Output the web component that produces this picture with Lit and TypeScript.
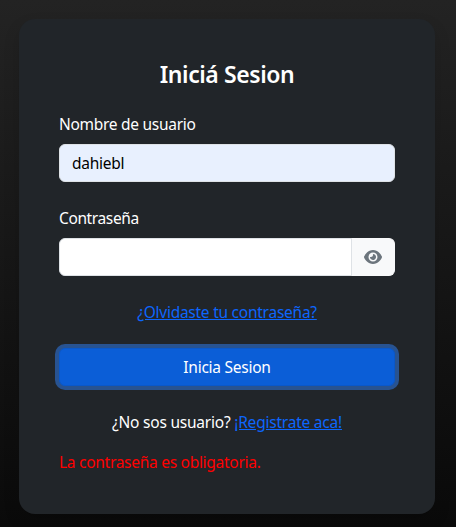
import { LitElement, html, css } from "lit";
import { customElement } from "lit/decorators.js";

@customElement("app-root")
export class AppRoot extends LitElement {
  static styles = css`
    :host {
      display: block;
      box-sizing: border-box;
      height: 100vh;
      padding: 19px 21px 13px 19px;
      overflow: hidden;
      background: linear-gradient(#232323, #0a0a0a);
      color: #fff;
      font: 400 15.5px/24px "Segoe UI", "Noto Sans", sans-serif;
    }
    * { box-sizing: border-box; }
    .card {
      display: flex;
      flex-direction: column;
      height: 495px;
      padding: 40px;
      border-radius: 16px;
      background: #212529;
      box-shadow: 0 8px 16px rgba(0, 0, 0, 0.15);
    }
    .title {
      margin: 0 0 22px;
      font-size: 23px;
      font-weight: 600;
      line-height: 31px;
      text-align: center;
    }
    .field { display: flex; flex-direction: column; gap: 8px; margin-bottom: 24px; }
    .row { display: flex; }
    span { white-space: nowrap; }
    input {
      flex: 1;
      min-width: 0;
      height: 38px;
      margin: 0;
      padding: 6px 12px;
      border: 1px solid #dee2e6;
      border-radius: 6px;
      outline: 0;
      background: #fff;
      color: #000;
      font: inherit;
      letter-spacing: inherit;
    }
    .filled { background: #e8f0fe; }
    .joined { border-radius: 6px 0 0 6px; }
    .eye {
      display: flex;
      align-items: center;
      justify-content: center;
      width: 44px;
      height: 38px;
      margin-left: -1px;
      padding: 0 1px 0 0;
      border: 1px solid #f8f9fa;
      border-left-color: #dee2e6;
      border-radius: 0 6px 6px 0;
      background: #f8f9fa;
      color: #6c757d;
    }
    .eye svg { display: block; width: 18px; height: 16px; }
    .line { text-align: center; white-space: nowrap; }
    a { color: #0d66fd; text-decoration: underline; }
    .submit {
      height: 38px;
      margin: 24px 0;
      padding: 0;
      border: 1px solid #0a58ca;
      border-radius: 6px;
      background: #0b5ed7;
      box-shadow: 0 0 0 4px #285391;
      color: #fff;
      font: inherit;
    }
    .error { margin-top: 16px; color: #ff0000; white-space: nowrap; }
    .t-title { letter-spacing: -0.42px; }
    .t-user { letter-spacing: -0.28px; }
    .t-pass { letter-spacing: -0.38px; }
    .filled.t-value { letter-spacing: -0.28px; }
    .t-forgot { letter-spacing: -0.25px; }
    .t-submit { letter-spacing: -0.25px; }
    .t-ask { letter-spacing: -0.22px; }
    .t-join { letter-spacing: -0.22px; }
    .t-error { letter-spacing: -0.28px; }
  `;

  render() {
    return html`
      <form class="card" @submit=${(e: Event) => e.preventDefault()}>
        <h1 class="title"><span class="t-title">Iniciá Sesion</span></h1>
        <label class="field">
          <span class="t-user">Nombre de usuario</span>
          <div class="row"><input class="filled t-value" type="text" value="dahiebl" /></div>
        </label>
        <div class="field">
          <span class="t-pass">Contraseña</span>
          <div class="row">
            <input class="joined" type="password" aria-label="Contraseña" />
            <button class="eye" type="button" aria-label="Mostrar contraseña">
              <svg viewBox="0 0 576 512" fill="currentColor">
                <path d="M288 32c-80.8 0-145.5 36.8-192.6 80.6C48.6 156 17.3 208 2.5 243.7c-3.3 7.9-3.3 16.7 0 24.6C17.3 304 48.6 356 95.4 399.4C142.5 443.2 207.2 480 288 480s145.5-36.8 192.6-80.6c46.8-43.5 78.1-95.4 93-131.1c3.3-7.9 3.3-16.7 0-24.6c-14.9-35.7-46.2-87.7-93-131.1C433.5 68.8 368.8 32 288 32zM144 256a144 144 0 1 1 288 0 144 144 0 1 1 -288 0zm144-64c0 35.3-28.7 64-64 64c-7.1 0-13.9-1.2-20.3-3.3c-5.5-1.8-11.9 1.6-11.7 7.4c.3 6.9 1.3 13.8 3.2 20.7c13.7 51.2 66.4 81.6 117.6 67.9s81.6-66.4 67.9-117.6c-11.1-41.5-47.8-69.4-88.6-71.1c-5.8-.2-9.2 6.1-7.4 11.7c2.1 6.4 3.3 13.2 3.3 20.3z" />
              </svg>
            </button>
          </div>
        </div>
        <div class="line"><a class="t-forgot" href="#">¿Olvidaste tu contraseña?</a></div>
        <button class="submit" type="submit"><span class="t-submit">Inicia Sesion</span></button>
        <div class="line"><span class="t-ask">¿No sos usuario? </span><a class="t-join" href="#">¡Registrate aca!</a></div>
        <div class="error"><span class="t-error">La contraseña es obligatoria.</span></div>
      </form>
    `;
  }
}
